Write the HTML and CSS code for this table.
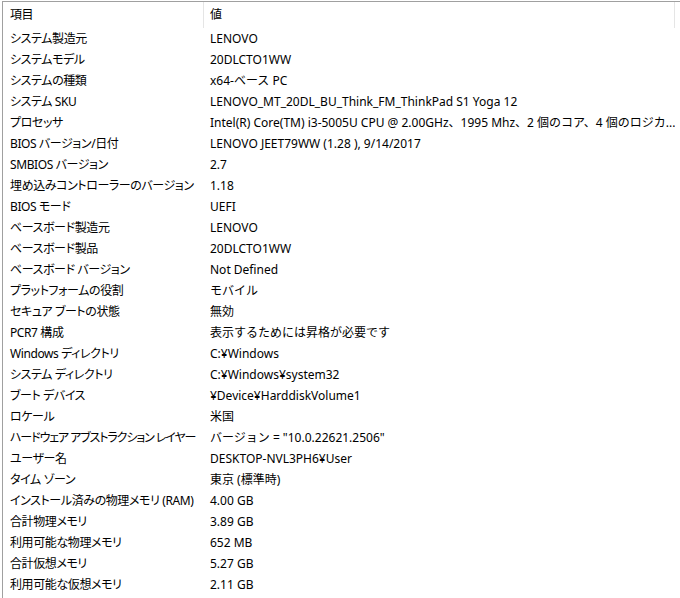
FILE: index.html
```html
<!DOCTYPE html>
<html lang="ja">
  <head>
    <meta charset="UTF-8" />
    <title>システム情報</title>
    <link rel="stylesheet" href="styles.css">
  </head>
  <body>
    <div class="list">
      <div class="head">
        <div class="cell name">項目</div>
        <div class="cell value sep">値</div>
      </div>
      <div class="row"><div class="cell name">システム製造元</div><div class="cell value">LENOVO</div></div>
      <div class="row"><div class="cell name">システムモデル</div><div class="cell value">20DLCTO1WW</div></div>
      <div class="row"><div class="cell name">システムの種類</div><div class="cell value">x64-ベース PC</div></div>
      <div class="row"><div class="cell name">システム SKU</div><div class="cell value">LENOVO_MT_20DL_BU_Think_FM_ThinkPad S1 Yoga 12</div></div>
      <div class="row"><div class="cell name">プロセッサ</div><div class="cell value">Intel(R) Core(TM) i3-5005U CPU @ 2.00GHz、1995 Mhz、2 個のコア、4 個のロジカ...</div></div>
      <div class="row"><div class="cell name">BIOS バージョン/日付</div><div class="cell value">LENOVO JEET79WW (1.28 ), 9/14/2017</div></div>
      <div class="row"><div class="cell name">SMBIOS バージョン</div><div class="cell value">2.7</div></div>
      <div class="row"><div class="cell name">埋め込みコントローラーのバージョン</div><div class="cell value">1.18</div></div>
      <div class="row"><div class="cell name">BIOS モード</div><div class="cell value">UEFI</div></div>
      <div class="row"><div class="cell name">ベースボード製造元</div><div class="cell value">LENOVO</div></div>
      <div class="row"><div class="cell name">ベースボード製品</div><div class="cell value">20DLCTO1WW</div></div>
      <div class="row"><div class="cell name">ベースボード バージョン</div><div class="cell value">Not Defined</div></div>
      <div class="row"><div class="cell name">プラットフォームの役割</div><div class="cell value">モバイル</div></div>
      <div class="row"><div class="cell name">セキュア ブートの状態</div><div class="cell value">無効</div></div>
      <div class="row"><div class="cell name">PCR7 構成</div><div class="cell value">表示するためには昇格が必要です</div></div>
      <div class="row"><div class="cell name">Windows ディレクトリ</div><div class="cell value">C:¥Windows</div></div>
      <div class="row"><div class="cell name">システム ディレクトリ</div><div class="cell value">C:¥Windows¥system32</div></div>
      <div class="row"><div class="cell name">ブート デバイス</div><div class="cell value">¥Device¥HarddiskVolume1</div></div>
      <div class="row"><div class="cell name">ロケール</div><div class="cell value">米国</div></div>
      <div class="row"><div class="cell name tight">ハードウェア アブストラクション レイヤー</div><div class="cell value">バージョン = "10.0.22621.2506"</div></div>
      <div class="row"><div class="cell name">ユーザー名</div><div class="cell value">DESKTOP-NVL3PH6¥User</div></div>
      <div class="row"><div class="cell name">タイム ゾーン</div><div class="cell value">東京 (標準時)</div></div>
      <div class="row"><div class="cell name">インストール済みの物理メモリ (RAM)</div><div class="cell value">4.00 GB</div></div>
      <div class="row"><div class="cell name">合計物理メモリ</div><div class="cell value">3.89 GB</div></div>
      <div class="row"><div class="cell name">利用可能な物理メモリ</div><div class="cell value">652 MB</div></div>
      <div class="row"><div class="cell name">合計仮想メモリ</div><div class="cell value">5.27 GB</div></div>
      <div class="row"><div class="cell name">利用可能な仮想メモリ</div><div class="cell value">2.11 GB</div></div>
    </div>
  </body>
</html>
```

FILE: styles.css
```css
body {
  margin: 0;
  background: #fff;
  color: #000;
  font-family: "Noto Sans", "Noto Sans CJK JP", sans-serif;
  font-size: 12px;
  font-feature-settings: "palt";
}
.list {
  margin: 1px 0 0 2px;
  border-top: 1px solid #a0a0a0;
  border-left: 1px solid #a0a0a0;
  height: 596px;
  overflow: hidden;
}
.head,
.row {
  display: grid;
  grid-template-columns: 200px 472px;
}
.head {
  height: 26px;
  align-items: center;
}
.row {
  height: 21px;
  align-items: center;
}
.cell {
  padding-left: 7px;
  white-space: nowrap;
  line-height: 21px;
}
.head .cell {
  line-height: 26px;
}
.name {
  letter-spacing: -0.4px;
}
.name.tight {
  letter-spacing: -1.1px;
}
.value {
  font-feature-settings: normal;
  overflow: hidden;
}
.sep {
  border-left: 1px solid #e5e5e5;
  border-right: 1px solid #e5e5e5;
  padding-left: 6px;
}
```
